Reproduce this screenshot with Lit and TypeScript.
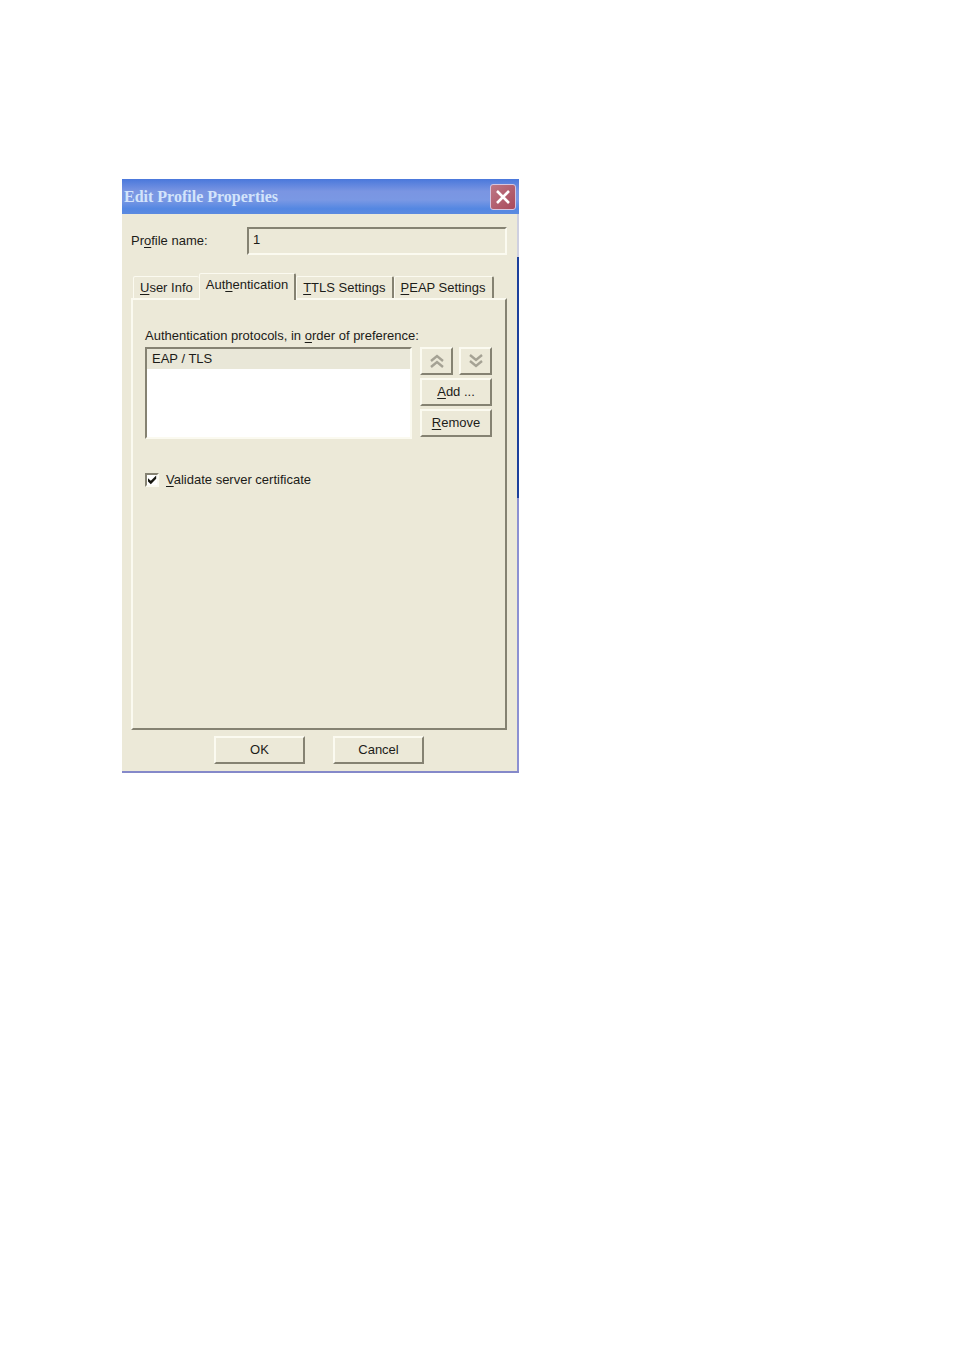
import { LitElement, html, css, svg } from "lit";
import { customElement, state } from "lit/decorators.js";

const TABS = [
  { id: "user", before: "", key: "U", after: "ser Info" },
  { id: "auth", before: "Aut", key: "h", after: "entication" },
  { id: "ttls", before: "", key: "T", after: "TLS Settings" },
  { id: "peap", before: "", key: "P", after: "EAP Settings" },
];

const chevrons = (points: string[]) => html`
  <svg class="chevrons" viewBox="0 0 16 16" aria-hidden="true">
    ${points.map((p) => svg`<polyline points=${p}></polyline>`)}
  </svg>
`;

@customElement("app-root")
export class AppRoot extends LitElement {
  @state() private tab = "auth";

  render() {
    return html`
      <main class="page">
        <section class="dialog" role="dialog" aria-labelledby="title">
          <header class="titlebar">
            <h1 class="title" id="title">Edit Profile Properties</h1>
            <button class="close" aria-label="Close">
              <svg class="cross" viewBox="0 0 14 14" aria-hidden="true">
                <path d="M1 1L13 13M13 1L1 13"></path>
              </svg>
            </button>
          </header>
          <div class="body">
            <div class="name-row">
              <label for="name">Pr<u>o</u>file name:</label>
              <input class="name" id="name" type="text" value="1" readonly />
            </div>
            <div class="tabs" role="tablist">
              ${TABS.map(
                (t) => html`
                  <button
                    class="tab"
                    role="tab"
                    aria-selected=${this.tab === t.id ? "true" : "false"}
                    @click=${() => (this.tab = t.id)}
                  >${t.before}<u>${t.key}</u>${t.after}</button>
                `
              )}
            </div>
            <div class="panel" role="tabpanel">
              ${this.tab === "auth" ? this.renderAuth() : ""}
            </div>
            <footer class="footer">
              <button class="btn wide">OK</button>
              <button class="btn wide">Cancel</button>
            </footer>
          </div>
        </section>
      </main>
    `;
  }

  private renderAuth() {
    return html`
      <label class="list-label" for="protocols"
        >Authentication protocols, in <u>o</u>rder of preference:</label
      >
      <div class="list-row">
        <select class="list" id="protocols" size="4">
          <option class="current">EAP / TLS</option>
        </select>
        <div class="actions">
          <button class="btn" aria-label="Move up" disabled>
            ${chevrons(["2,8 8,3 14,8", "2,14 8,9 14,14"])}
          </button>
          <button class="btn" aria-label="Move down" disabled>
            ${chevrons(["2,2 8,7 14,2", "2,8 8,13 14,8"])}
          </button>
          <button class="btn full"><u>A</u>dd ...</button>
          <button class="btn full"><u>R</u>emove</button>
        </div>
      </div>
      <label class="check">
        <input class="box" type="checkbox" checked />
        <span><u>V</u>alidate server certificate</span>
      </label>
    `;
  }

  static styles = css`
    :host {
      --face: #ece9d8;
      --light: #fbfaf0;
      --shadow: #858272;
      display: block;
      background: #fff;
      color: #1c1c18;
      font: 13px/16px "Liberation Sans", Arial, sans-serif;
    }
    * {
      box-sizing: border-box;
    }
    button,
    input,
    select {
      margin: 0;
      border-radius: 0;
      color: inherit;
      font: inherit;
    }
    u {
      text-underline-offset: 2px;
    }
    .page {
      padding: 179px 122px;
    }
    .dialog {
      max-width: 397px;
      border-bottom: 2px solid #8589c9;
      background: var(--face);
    }
    .titlebar {
      display: flex;
      align-items: center;
      justify-content: space-between;
      height: 35px;
      padding: 0 3px 0 2px;
      background: linear-gradient(#4a78dc, #7a95e2 35%, #7a98e4 60%, #5487e2 85%, #5c8ae0);
    }
    .title {
      margin: 0;
      color: #d3e4fb;
      font: bold 16px/20px "Liberation Serif", "Times New Roman", serif;
    }
    .close {
      display: flex;
      align-items: center;
      justify-content: center;
      width: 26px;
      height: 26px;
      padding: 0;
      border: 1px solid #d5c5df;
      border-radius: 3px;
      background: linear-gradient(135deg, #bd7785, #a94a5b);
    }
    .cross {
      width: 14px;
      height: 14px;
      fill: none;
      stroke: #fff;
      stroke-width: 2.6;
    }
    .body {
      padding: 13px 10px 7px 9px;
      border-right: 2px solid;
      border-image: linear-gradient(#cfd0e0 44px, #1c3f9c 44px, #1c3f9c 284px, #8c90d2 284px) 1;
    }
    .name-row {
      display: flex;
      align-items: center;
      justify-content: space-between;
    }
    .name {
      width: 260px;
      height: 28px;
      padding: 0 4px 4px;
      border: 2px solid;
      border-color: var(--shadow) var(--light) var(--light) var(--shadow);
      outline: none;
      background: var(--face);
    }
    .tabs {
      display: flex;
      align-items: flex-end;
      height: 25px;
      margin-top: 18px;
      padding-left: 2px;
    }
    .tab {
      height: 22px;
      padding: 0 6px;
      border: solid;
      border-width: 1px 2px 0 1px;
      border-color: var(--light) var(--shadow) transparent var(--light);
      border-radius: 2px 2px 0 0;
      background: var(--face);
      white-space: nowrap;
    }
    .tab:has(+ .tab[aria-selected="true"]) {
      border-right-width: 0;
    }
    .tab[aria-selected="true"] {
      z-index: 1;
      height: 27px;
      margin-bottom: -2px;
      padding-bottom: 4px;
    }
    .panel {
      height: 432px;
      padding: 28px 13px 28px 12px;
      border: 2px solid;
      border-color: var(--light) var(--shadow) var(--shadow) var(--light);
    }
    .list-label {
      display: block;
      white-space: nowrap;
    }
    .list-row {
      display: flex;
      justify-content: space-between;
      margin-top: 3px;
    }
    .list {
      width: 267px;
      height: 92px;
      padding: 0;
      border: 2px solid;
      border-color: var(--shadow) var(--light) var(--light) var(--shadow);
      outline: none;
      background: #fff;
      overflow: hidden;
    }
    .current {
      min-height: 20px;
      padding: 2px 5px;
      background: #e9e7d8;
    }
    .actions {
      display: grid;
      grid-template-columns: 33px 33px;
      grid-auto-rows: 28px;
      gap: 3px 6px;
    }
    .btn {
      display: block;
      height: 28px;
      padding: 0;
      border: 2px solid;
      border-color: var(--light) var(--shadow) var(--shadow) var(--light);
      background: var(--face);
    }
    .full {
      grid-column: span 2;
    }
    .wide {
      width: 91px;
    }
    .chevrons {
      display: block;
      width: 16px;
      height: 16px;
      margin: 0 auto;
      fill: none;
      stroke: #a5a294;
      stroke-width: 2.4;
    }
    .check {
      display: flex;
      align-items: center;
      gap: 7px;
      width: max-content;
      margin-top: 33px;
    }
    .box {
      width: 14px;
      height: 14px;
      border: 2px solid;
      border-color: var(--shadow) var(--light) var(--light) var(--shadow);
      appearance: none;
      background: #fff;
    }
    .box:checked::before {
      content: "";
      display: block;
      height: 10px;
      background: #16160f;
      clip-path: polygon(10% 32%, 38% 58%, 92% 4%, 92% 38%, 38% 92%, 10% 66%);
    }
    .footer {
      display: flex;
      justify-content: center;
      gap: 28px;
      margin-top: 6px;
    }
  `;
}
